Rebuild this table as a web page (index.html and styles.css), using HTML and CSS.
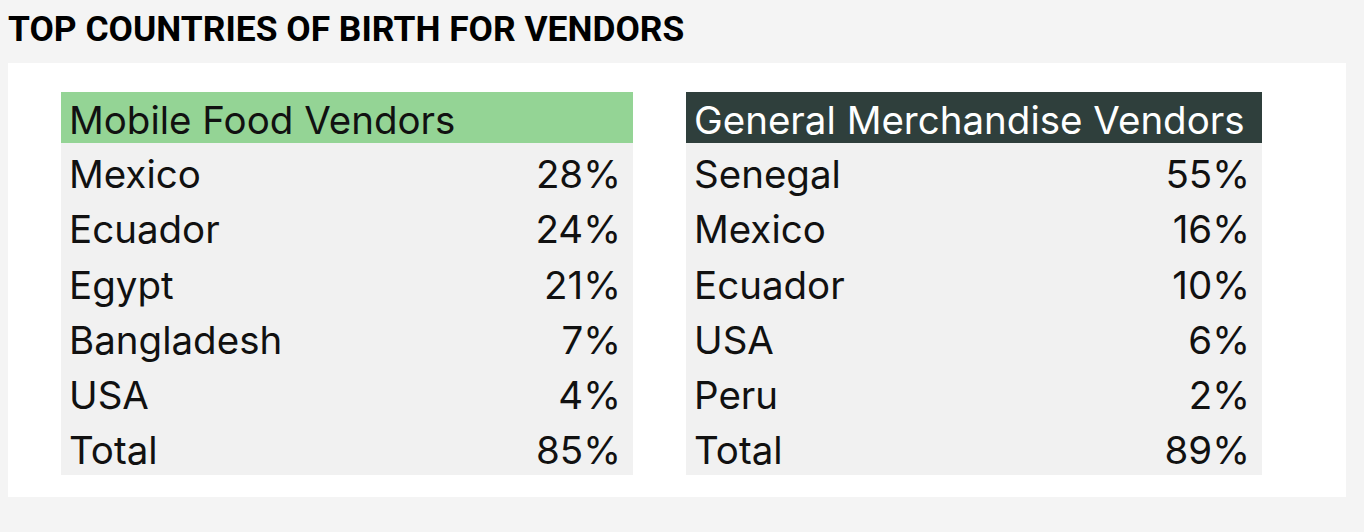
FILE: index.html
```html
<!DOCTYPE html>
<html>
<head>
<meta charset="utf-8">
<link rel="stylesheet" href="styles.css">
</head>
<body>
<h1 class="title">TOP COUNTRIES OF BIRTH FOR VENDORS</h1>
<div class="panel">
  <div class="table">
    <div class="head head-green">Mobile Food Vendors</div>
    <div class="row"><span>Mexico</span><span>28%</span></div>
    <div class="row"><span>Ecuador</span><span>24%</span></div>
    <div class="row"><span>Egypt</span><span>21%</span></div>
    <div class="row"><span>Bangladesh</span><span>7%</span></div>
    <div class="row"><span>USA</span><span>4%</span></div>
    <div class="row"><span>Total</span><span>85%</span></div>
  </div>
  <div class="table table-right">
    <div class="head head-dark">General Merchandise Vendors</div>
    <div class="row"><span>Senegal</span><span>55%</span></div>
    <div class="row"><span>Mexico</span><span>16%</span></div>
    <div class="row"><span>Ecuador</span><span>10%</span></div>
    <div class="row"><span>USA</span><span>6%</span></div>
    <div class="row"><span>Peru</span><span>2%</span></div>
    <div class="row"><span>Total</span><span>89%</span></div>
  </div>
</div>
</body>
</html>
```
FILE: styles.css
```css
html, body {
  margin: 0;
  padding: 0;
  background: #f4f4f4;
}
body {
  width: 1364px;
  height: 532px;
  overflow: hidden;
}
.title {
  margin: 0;
  padding: 10px 0 0 8px;
  height: 52px;
  box-sizing: border-box;
  font-family: Roboto, "Liberation Sans", sans-serif;
  font-weight: 700;
  font-size: 35.4px;
  line-height: 38px;
  color: #000;
  white-space: nowrap;
}
.panel {
  margin-left: 8px;
  width: 1338px;
  height: 434px;
  margin-top: 11px;
  background: #fff;
  box-sizing: border-box;
  padding: 29px 0 0 53px;
  display: flex;
  gap: 53px;
  align-items: flex-start;
}
.table {
  width: 572px;
  background: #f1f1f1;
  font-family: Inter, "Noto Sans", sans-serif;
  font-size: 38.5px;
  color: #111;
}
.table-right {
  width: 576px;
}
.head {
  height: 51px;
  line-height: 56px;
  padding-left: 8px;
  white-space: nowrap;
  overflow: hidden;
}
.head-green {
  background: #94d495;
  color: #111;
}
.head-dark {
  background: #2f3f3c;
  color: #fff;
}
.row {
  height: 55.3px;
  line-height: 62px;
  display: flex;
  justify-content: space-between;
  padding: 0 12px 0 8px;
  overflow: hidden;
}
```
